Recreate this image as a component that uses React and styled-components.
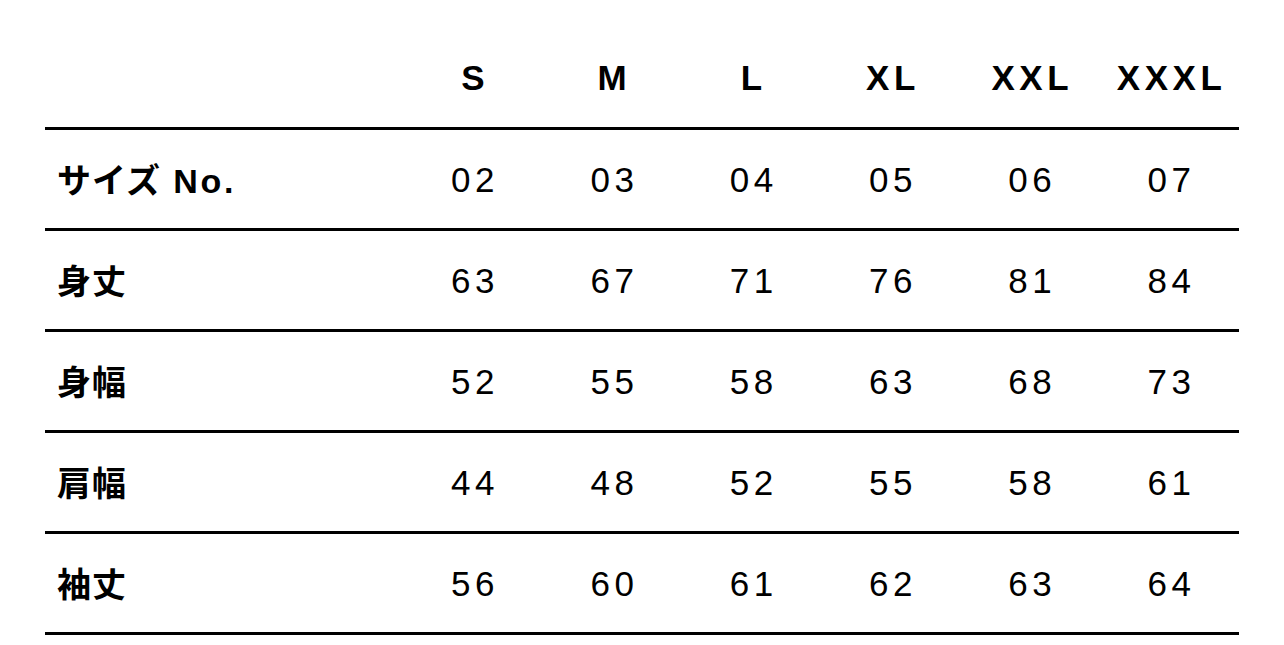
import React from "react";
import styled, { createGlobalStyle } from "styled-components";

const GlobalStyle = createGlobalStyle`
  html, body {
    margin: 0;
    padding: 0;
    background: #ffffff;
  }
  body {
    font-family: "Liberation Sans", "Noto Sans CJK JP", Arial, sans-serif;
    color: #000;
  }
`;

const Page = styled.div`
  padding: 30px 45px 0;
`;

const Table = styled.table`
  width: 100%;
  border-collapse: collapse;
  table-layout: fixed;
  font-size: 35px;
  letter-spacing: 0.13em;
`;

const HeadCell = styled.th`
  box-sizing: border-box;
  height: 98px;
  padding: ${(p) => (p.$first ? "0" : "0 0 0 0.13em")};
  font-weight: 700;
  text-align: center;
  vertical-align: middle;
  border-bottom: 3px solid #000;
  width: ${(p) => (p.$first ? "30%" : "auto")};
`;

const Row = styled.tr`
  border-bottom: 3px solid #000;
`;

const Label = styled.th`
  height: 98px;
  padding: 0 0 0 12px;
  text-align: left;
  font-weight: 700;
  font-size: 34px;
  vertical-align: middle;
  letter-spacing: 0.03em;
`;

const Latin = styled.span`
  letter-spacing: 0.08em;
`;

const Cell = styled.td`
  padding: 2px 0 0 0.13em;
  text-align: center;
  vertical-align: middle;
  font-weight: 400;
`;

const sizes = ["S", "M", "L", "XL", "XXL", "XXXL"];

const rows = [
  { label: "サイズ", latin: " No.", values: ["02", "03", "04", "05", "06", "07"] },
  { label: "身丈", values: ["63", "67", "71", "76", "81", "84"] },
  { label: "身幅", values: ["52", "55", "58", "63", "68", "73"] },
  { label: "肩幅", values: ["44", "48", "52", "55", "58", "61"] },
  { label: "袖丈", values: ["56", "60", "61", "62", "63", "64"] },
];

const App = () => {
  return (
    <Page>
      <GlobalStyle />
      <Table>
        <thead>
          <tr>
            <HeadCell $first />
            {sizes.map((s) => (
              <HeadCell key={s}>{s}</HeadCell>
            ))}
          </tr>
        </thead>
        <tbody>
          {rows.map((r) => (
            <Row key={r.label}>
              <Label>
                {r.label}
                {r.latin && <Latin>{r.latin}</Latin>}
              </Label>
              {r.values.map((v, i) => (
                <Cell key={i}>{v}</Cell>
              ))}
            </Row>
          ))}
        </tbody>
      </Table>
    </Page>
  );
};

export default App;
